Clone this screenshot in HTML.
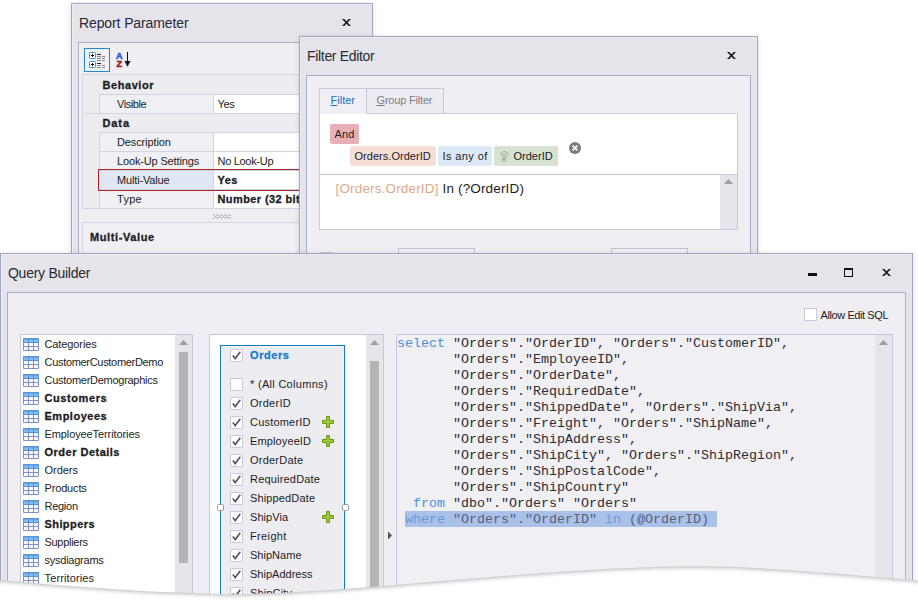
<!DOCTYPE html>
<html><head><meta charset="utf-8"><title>Query Builder</title><style>
*{box-sizing:border-box;margin:0;padding:0}
html,body{width:918px;height:601px;overflow:hidden;background:#fff}
body{position:relative;font-family:"Liberation Sans", "DejaVu Sans", sans-serif;font-size:11px;color:#1c1c24;line-height:1}
.a{position:absolute}
.t{position:absolute;white-space:pre;line-height:1}
.b{font-weight:bold;-webkit-text-stroke:0.3px}
.win{position:absolute;background:#e4e4ea;border:1px solid #a2a5c4;box-shadow:inset 1px 1px 0 #ededf2, 0 1px 5px rgba(0,0,0,0.140)}
.ttl{position:absolute;white-space:pre;font-size:13px;color:#2a2a36;line-height:1}
.pnl{position:absolute;background:#eeeef3;border:1px solid #abaecb}
.cb{position:absolute;width:13px;height:13px;background:#fff;border:1px solid #c9cbdb}
.mono{font-family:"Liberation Mono", "DejaVu Sans Mono", monospace;font-size:13.33px;white-space:pre;position:absolute;line-height:16px;color:#2c2c36}
.kw{color:#4a8fd8}
</style></head><body>
<div class="win" style="left:71px;top:3px;width:302px;height:300px"></div>
<div class="t " style="left:79px;top:16px;font-size:14px;line-height:14px;letter-spacing:-0.11px;color:#2a2a36">Report Parameter</div>
<svg class="a" style="left:341px;top:18px" width="11" height="9" viewBox="0 0 11 9"><path d="M1 1H3.300L10 8H7.700Z" fill="#1c1c1c"/><path d="M10 1H7.700L1 8H3.300Z" fill="#1c1c1c"/></svg>
<div class="pnl" style="left:78px;top:42px;width:288px;height:260px"></div>
<div class="a" style="left:84px;top:48px;width:26px;height:24px;border:1px solid #2388d2;background:#f1f1f5"></div>
<svg class="a" style="left:89px;top:52px" width="17" height="17" viewBox="0 0 17 17">
<rect x="0.5" y="0.5" width="6" height="6" rx="1" fill="#fff" stroke="#2f8cf0" stroke-width="1"/>
<rect x="0.5" y="9.5" width="6" height="6" rx="1" fill="#fff" stroke="#2f8cf0" stroke-width="1"/>
<path d="M2 3.5h3M3.5 2v3M2 12.5h3M3.5 11v3" stroke="#111" stroke-width="1"/>
<path d="M8 2.5h4M8 11.5h4" stroke="#222" stroke-width="1"/>
<path d="M8 4.5h4M8 6.5h4M8 8.5h4M8 13.5h4M8 15.5h4M13 4.500h3M13 6.5h3M13 8.5h3M13 13.5h3M13 15.5h3" stroke="#8a8a8a" stroke-width="1"/>
</svg>
<div class="t b" style="left:116px;top:52px;font-size:9px;color:#2a62e0;line-height:9px;-webkit-text-stroke:0.600px #2a62e0">A</div>
<div class="t b" style="left:116.500px;top:60px;font-size:9px;color:#9a1818;line-height:9px;-webkit-text-stroke:0.600px #9a1818">Z</div>
<svg class="a" style="left:124px;top:52px" width="7" height="15" viewBox="0 0 7 15"><path d="M3.500 0V10" stroke="#111" stroke-width="1"/><path d="M0.500 9 L6.500 9 L3.500 14.800 Z" fill="#111"/></svg>
<div class="a" style="left:82px;top:74px;width:290px;height:135px;border:1px solid #d2d4e2;background:#ececf1"></div>
<div class="t b" style="left:102.5px;top:80px;font-size:11px;line-height:11px;letter-spacing:0.56px;">Behavior</div>
<div class="a" style="left:99px;top:94px;width:115px;height:20px;background:#efeff4;border:1px solid #d2d4e2"></div>
<div class="a" style="left:213px;top:94px;width:160px;height:20px;background:#fff;border:1px solid #d2d4e2"></div>
<div class="t " style="left:117px;top:99px;font-size:11px;line-height:11px;letter-spacing:-0.45px;">Visible</div>
<div class="t " style="left:217.5px;top:99px;font-size:11px;line-height:11px;letter-spacing:-0.30px;">Yes</div>
<div class="t b" style="left:102.5px;top:118px;font-size:11px;line-height:11px;letter-spacing:0.90px;">Data</div>
<div class="a" style="left:99px;top:132px;width:115px;height:20px;background:#efeff4;border:1px solid #d2d4e2"></div>
<div class="a" style="left:213px;top:132px;width:160px;height:20px;background:#fff;border:1px solid #d2d4e2"></div>
<div class="t " style="left:117px;top:137px;font-size:11px;line-height:11px;letter-spacing:-0.12px;">Description</div>
<div class="a" style="left:99px;top:151px;width:115px;height:20px;background:#efeff4;border:1px solid #d2d4e2"></div>
<div class="a" style="left:213px;top:151px;width:160px;height:20px;background:#fff;border:1px solid #d2d4e2"></div>
<div class="t " style="left:117px;top:156px;font-size:11px;line-height:11px;letter-spacing:-0.15px;">Look-Up Settings</div>
<div class="t " style="left:217.5px;top:156px;font-size:11px;line-height:11px;letter-spacing:-0.30px;">No Look-Up</div>
<div class="a" style="left:99px;top:170px;width:115px;height:20px;background:#dfe7f5;border:1px solid #d2d4e2"></div>
<div class="a" style="left:213px;top:170px;width:160px;height:20px;background:#fff;border:1px solid #d2d4e2"></div>
<div class="t " style="left:117px;top:175px;font-size:11px;line-height:11px;letter-spacing:-0.15px;">Multi-Value</div>
<div class="t b" style="left:217.5px;top:175px;font-size:11px;line-height:11px;letter-spacing:0.40px;">Yes</div>
<div class="a" style="left:99px;top:189px;width:115px;height:20px;background:#efeff4;border:1px solid #d2d4e2"></div>
<div class="a" style="left:213px;top:189px;width:160px;height:20px;background:#fff;border:1px solid #d2d4e2"></div>
<div class="t " style="left:117px;top:194px;font-size:11px;line-height:11px;letter-spacing:0.28px;">Type</div>
<div class="t b" style="left:217.5px;top:194px;font-size:11px;line-height:11px;letter-spacing:0.40px;">Number (32 bit integer)</div>
<div class="a" style="left:84px;top:113px;width:15px;height:1px;background:#d2d4e2"></div>
<div class="a" style="left:98px;top:169px;width:280px;height:22px;border:1px solid #a8222a;border-right:none"></div>
<div class="a" style="left:99px;top:170px;width:115px;height:20px;"></div>
<svg class="a" style="left:213px;top:214px" width="18" height="5" viewBox="0 0 18 5"><rect x="0" y="0" width="1" height="1" fill="#a6a8bc"/><rect x="4" y="0" width="1" height="1" fill="#a6a8bc"/><rect x="8" y="0" width="1" height="1" fill="#a6a8bc"/><rect x="12" y="0" width="1" height="1" fill="#a6a8bc"/><rect x="16" y="0" width="1" height="1" fill="#a6a8bc"/><rect x="1" y="1" width="1" height="1" fill="#a6a8bc"/><rect x="3" y="1" width="1" height="1" fill="#a6a8bc"/><rect x="5" y="1" width="1" height="1" fill="#a6a8bc"/><rect x="7" y="1" width="1" height="1" fill="#a6a8bc"/><rect x="9" y="1" width="1" height="1" fill="#a6a8bc"/><rect x="11" y="1" width="1" height="1" fill="#a6a8bc"/><rect x="13" y="1" width="1" height="1" fill="#a6a8bc"/><rect x="15" y="1" width="1" height="1" fill="#a6a8bc"/><rect x="17" y="1" width="1" height="1" fill="#a6a8bc"/><rect x="2" y="2" width="1" height="1" fill="#a6a8bc"/><rect x="6" y="2" width="1" height="1" fill="#a6a8bc"/><rect x="10" y="2" width="1" height="1" fill="#a6a8bc"/><rect x="14" y="2" width="1" height="1" fill="#a6a8bc"/><rect x="1" y="3" width="1" height="1" fill="#a6a8bc"/><rect x="3" y="3" width="1" height="1" fill="#a6a8bc"/><rect x="5" y="3" width="1" height="1" fill="#a6a8bc"/><rect x="7" y="3" width="1" height="1" fill="#a6a8bc"/><rect x="9" y="3" width="1" height="1" fill="#a6a8bc"/><rect x="11" y="3" width="1" height="1" fill="#a6a8bc"/><rect x="13" y="3" width="1" height="1" fill="#a6a8bc"/><rect x="15" y="3" width="1" height="1" fill="#a6a8bc"/><rect x="17" y="3" width="1" height="1" fill="#a6a8bc"/><rect x="0" y="4" width="1" height="1" fill="#a6a8bc"/><rect x="4" y="4" width="1" height="1" fill="#a6a8bc"/><rect x="8" y="4" width="1" height="1" fill="#a6a8bc"/><rect x="12" y="4" width="1" height="1" fill="#a6a8bc"/><rect x="16" y="4" width="1" height="1" fill="#a6a8bc"/></svg>
<div class="a" style="left:82px;top:222px;width:290px;height:60px;border:1px solid #d2d4e2;background:#efeff4"></div>
<div class="t b" style="left:90px;top:232px;font-size:11px;line-height:11px;letter-spacing:0.61px;">Multi-Value</div>
<div class="win" style="left:299px;top:36px;width:459px;height:260px"></div>
<div class="t " style="left:307px;top:49px;font-size:14px;line-height:14px;letter-spacing:-0.32px;color:#2a2a36">Filter Editor</div>
<svg class="a" style="left:726px;top:51px" width="11" height="9" viewBox="0 0 11 9"><path d="M1 1H3.300L10 8H7.700Z" fill="#1c1c1c"/><path d="M10 1H7.700L1 8H3.300Z" fill="#1c1c1c"/></svg>
<div class="pnl" style="left:306px;top:75px;width:445px;height:220px"></div>
<div class="a" style="left:319px;top:113px;width:419px;height:117px;background:#fff;border:1px solid #c8cadb"></div>
<div class="a" style="left:319px;top:88px;width:48px;height:26px;background:#efeff4;border:1px solid #c8cadb;border-bottom:none"></div>
<div class="a" style="left:366px;top:88px;width:78px;height:26px;background:#ececf1;border:1px solid #c8cadb"></div>
<div class="t " style="left:330.5px;top:95px;font-size:11px;line-height:11px;letter-spacing:0.01px;color:#1a70c8"><u>F</u>ilter</div>
<div class="t " style="left:376.5px;top:95px;font-size:11px;line-height:11px;letter-spacing:-0.19px;color:#7c7c88"><u>G</u>roup Filter</div>
<div class="a" style="left:330px;top:124px;width:29px;height:20px;background:#e8b0b4;border-radius:2px"></div>
<div class="t " style="left:334.5px;top:129px;font-size:11px;line-height:11px;letter-spacing:0.21px;">And</div>
<div class="a" style="left:350px;top:146px;width:86px;height:20px;background:#f5ded8;border-radius:2px"></div>
<div class="t " style="left:354.5px;top:151px;font-size:11px;line-height:11px;letter-spacing:0.03px;">Orders.OrderID</div>
<div class="a" style="left:438px;top:146px;width:54px;height:20px;background:#dde9f6;border-radius:2px"></div>
<div class="t " style="left:442.5px;top:151px;font-size:11px;line-height:11px;letter-spacing:0.39px;">Is any of</div>
<div class="a" style="left:494px;top:146px;width:64px;height:20px;background:#d6e2d2;border-radius:2px"></div>
<div class="t " style="left:513.5px;top:151px;font-size:11px;line-height:11px;letter-spacing:0.01px;">OrderID</div>
<div class="t" style="left:500.300px;top:150px;font-size:13px;line-height:13px;font-weight:bold;color:#d6e2d2;-webkit-text-stroke:1px #7f8582;paint-order:stroke fill">?</div>
<svg class="a" style="left:569px;top:142px" width="12" height="12" viewBox="0 0 12 12"><circle cx="6" cy="6" r="6" fill="#7d7d7d"/><path d="M3.600 3.600L8.400 8.400M8.400 3.600L3.600 8.400" stroke="#fff" stroke-width="1.600"/></svg>
<div class="a" style="left:320px;top:174px;width:417px;height:1px;background:#c8cadb"></div>
<div class="a" style="left:720px;top:175px;width:17px;height:54px;background:#e6e6ea"></div>
<svg class="a" style="left:724px;top:179px" width="9" height="5" viewBox="0 0 9 5"><path d="M0 5L4.500 0L9 5Z" fill="#9e9ea2"/></svg>
<div class="t " style="left:335.5px;top:182px;font-size:13.5px;line-height:13.5px;letter-spacing:0.16px;"><span style="color:#e0a98c">[Orders.OrderID]</span> In (?OrderID)</div>
<div class="a" style="left:320px;top:252px;width:13px;height:6px;background:#f6f6f9;border:1px solid #c6c8d6"></div>
<div class="a" style="left:398px;top:248px;width:77px;height:10px;background:#efeff4;border:1px solid #c0c2d4"></div>
<div class="a" style="left:611px;top:248px;width:77px;height:10px;background:#efeff4;border:1px solid #c0c2d4"></div>
<div class="win" style="left:0px;top:253px;width:913px;height:360px"></div>
<div class="t " style="left:8px;top:266px;font-size:14px;line-height:14px;letter-spacing:-0.27px;color:#2a2a36">Query Builder</div>
<div class="a" style="left:808px;top:273px;width:9px;height:3px;background:#111"></div>
<div class="a" style="left:844px;top:268px;width:9px;height:9px;border:1px solid #111;border-top-width:2px"></div>
<svg class="a" style="left:881px;top:268px" width="11" height="9" viewBox="0 0 11 9"><path d="M1 1H3.300L10 8H7.700Z" fill="#1c1c1c"/><path d="M10 1H7.700L1 8H3.300Z" fill="#1c1c1c"/></svg>
<div class="pnl" style="left:7px;top:292px;width:899px;height:320px"></div>
<div class="cb" style="left:804px;top:308px;background:#fff"></div>
<div class="t " style="left:820.5px;top:310px;font-size:11px;line-height:11px;letter-spacing:-0.41px;">Allow Edit SQL</div>
<div class="a" style="left:20px;top:334px;width:173px;height:280px;background:#fff;border:1px solid #c6c8da"></div>
<div class="a" style="left:175px;top:335px;width:17px;height:278px;background:#e6e6ea"></div>
<svg class="a" style="left:179px;top:340px" width="9" height="5" viewBox="0 0 9 5"><path d="M0 5L4.500 0L9 5Z" fill="#9e9ea2"/></svg>
<div class="a" style="left:179px;top:352px;width:9px;height:211px;background:#b4b4b6"></div>
<svg class="a" style="left:23px;top:338px" width="16" height="13" viewBox="0 0 16 13">
<rect x="0" y="0" width="16" height="13" rx="1.200" fill="#8190cb"/>
<path d="M0 5V1.200Q0 0 1.200 0H14.800Q16 0 16 1.200V5Z" fill="#5593d8"/>
<path d="M1 1h4v3h-4zM6 1h4v3h-4zM11 1h4v3h-4z" fill="#86bdf0"/>
<path d="M1 1h4v1h-4zM6 1h4v1h-4zM11 1h4v1h-4z" fill="#6aa9e6"/>
<path d="M1 5h4v3h-4zM6 5h4v3h-4zM11 5h4v3h-4zM1 9h4v3h-4zM6 9h4v3h-4zM11 9h4v3h-4z" fill="#f6f8fd"/>
</svg>
<div class="t " style="left:44.5px;top:339px;font-size:11px;line-height:11px;letter-spacing:-0.10px;">Categories</div>
<svg class="a" style="left:23px;top:356px" width="16" height="13" viewBox="0 0 16 13">
<rect x="0" y="0" width="16" height="13" rx="1.200" fill="#8190cb"/>
<path d="M0 5V1.200Q0 0 1.200 0H14.800Q16 0 16 1.200V5Z" fill="#5593d8"/>
<path d="M1 1h4v3h-4zM6 1h4v3h-4zM11 1h4v3h-4z" fill="#86bdf0"/>
<path d="M1 1h4v1h-4zM6 1h4v1h-4zM11 1h4v1h-4z" fill="#6aa9e6"/>
<path d="M1 5h4v3h-4zM6 5h4v3h-4zM11 5h4v3h-4zM1 9h4v3h-4zM6 9h4v3h-4zM11 9h4v3h-4z" fill="#f6f8fd"/>
</svg>
<div class="t " style="left:44.5px;top:357px;font-size:11px;line-height:11px;letter-spacing:-0.31px;">CustomerCustomerDemo</div>
<svg class="a" style="left:23px;top:374px" width="16" height="13" viewBox="0 0 16 13">
<rect x="0" y="0" width="16" height="13" rx="1.200" fill="#8190cb"/>
<path d="M0 5V1.200Q0 0 1.200 0H14.800Q16 0 16 1.200V5Z" fill="#5593d8"/>
<path d="M1 1h4v3h-4zM6 1h4v3h-4zM11 1h4v3h-4z" fill="#86bdf0"/>
<path d="M1 1h4v1h-4zM6 1h4v1h-4zM11 1h4v1h-4z" fill="#6aa9e6"/>
<path d="M1 5h4v3h-4zM6 5h4v3h-4zM11 5h4v3h-4zM1 9h4v3h-4zM6 9h4v3h-4zM11 9h4v3h-4z" fill="#f6f8fd"/>
</svg>
<div class="t " style="left:44.5px;top:375px;font-size:11px;line-height:11px;letter-spacing:-0.27px;">CustomerDemographics</div>
<svg class="a" style="left:23px;top:392px" width="16" height="13" viewBox="0 0 16 13">
<rect x="0" y="0" width="16" height="13" rx="1.200" fill="#8190cb"/>
<path d="M0 5V1.200Q0 0 1.200 0H14.800Q16 0 16 1.200V5Z" fill="#5593d8"/>
<path d="M1 1h4v3h-4zM6 1h4v3h-4zM11 1h4v3h-4z" fill="#86bdf0"/>
<path d="M1 1h4v1h-4zM6 1h4v1h-4zM11 1h4v1h-4z" fill="#6aa9e6"/>
<path d="M1 5h4v3h-4zM6 5h4v3h-4zM11 5h4v3h-4zM1 9h4v3h-4zM6 9h4v3h-4zM11 9h4v3h-4z" fill="#f6f8fd"/>
</svg>
<div class="t b" style="left:44.5px;top:393px;font-size:11px;line-height:11px;letter-spacing:0.59px;">Customers</div>
<svg class="a" style="left:23px;top:410px" width="16" height="13" viewBox="0 0 16 13">
<rect x="0" y="0" width="16" height="13" rx="1.200" fill="#8190cb"/>
<path d="M0 5V1.200Q0 0 1.200 0H14.800Q16 0 16 1.200V5Z" fill="#5593d8"/>
<path d="M1 1h4v3h-4zM6 1h4v3h-4zM11 1h4v3h-4z" fill="#86bdf0"/>
<path d="M1 1h4v1h-4zM6 1h4v1h-4zM11 1h4v1h-4z" fill="#6aa9e6"/>
<path d="M1 5h4v3h-4zM6 5h4v3h-4zM11 5h4v3h-4zM1 9h4v3h-4zM6 9h4v3h-4zM11 9h4v3h-4z" fill="#f6f8fd"/>
</svg>
<div class="t b" style="left:44.5px;top:411px;font-size:11px;line-height:11px;letter-spacing:0.51px;">Employees</div>
<svg class="a" style="left:23px;top:428px" width="16" height="13" viewBox="0 0 16 13">
<rect x="0" y="0" width="16" height="13" rx="1.200" fill="#8190cb"/>
<path d="M0 5V1.200Q0 0 1.200 0H14.800Q16 0 16 1.200V5Z" fill="#5593d8"/>
<path d="M1 1h4v3h-4zM6 1h4v3h-4zM11 1h4v3h-4z" fill="#86bdf0"/>
<path d="M1 1h4v1h-4zM6 1h4v1h-4zM11 1h4v1h-4z" fill="#6aa9e6"/>
<path d="M1 5h4v3h-4zM6 5h4v3h-4zM11 5h4v3h-4zM1 9h4v3h-4zM6 9h4v3h-4zM11 9h4v3h-4z" fill="#f6f8fd"/>
</svg>
<div class="t " style="left:44.5px;top:429px;font-size:11px;line-height:11px;letter-spacing:-0.10px;">EmployeeTerritories</div>
<svg class="a" style="left:23px;top:446px" width="16" height="13" viewBox="0 0 16 13">
<rect x="0" y="0" width="16" height="13" rx="1.200" fill="#8190cb"/>
<path d="M0 5V1.200Q0 0 1.200 0H14.800Q16 0 16 1.200V5Z" fill="#5593d8"/>
<path d="M1 1h4v3h-4zM6 1h4v3h-4zM11 1h4v3h-4z" fill="#86bdf0"/>
<path d="M1 1h4v1h-4zM6 1h4v1h-4zM11 1h4v1h-4z" fill="#6aa9e6"/>
<path d="M1 5h4v3h-4zM6 5h4v3h-4zM11 5h4v3h-4zM1 9h4v3h-4zM6 9h4v3h-4zM11 9h4v3h-4z" fill="#f6f8fd"/>
</svg>
<div class="t b" style="left:44.5px;top:447px;font-size:11px;line-height:11px;letter-spacing:0.49px;">Order Details</div>
<svg class="a" style="left:23px;top:464px" width="16" height="13" viewBox="0 0 16 13">
<rect x="0" y="0" width="16" height="13" rx="1.200" fill="#8190cb"/>
<path d="M0 5V1.200Q0 0 1.200 0H14.800Q16 0 16 1.200V5Z" fill="#5593d8"/>
<path d="M1 1h4v3h-4zM6 1h4v3h-4zM11 1h4v3h-4z" fill="#86bdf0"/>
<path d="M1 1h4v1h-4zM6 1h4v1h-4zM11 1h4v1h-4z" fill="#6aa9e6"/>
<path d="M1 5h4v3h-4zM6 5h4v3h-4zM11 5h4v3h-4zM1 9h4v3h-4zM6 9h4v3h-4zM11 9h4v3h-4z" fill="#f6f8fd"/>
</svg>
<div class="t " style="left:44.5px;top:465px;font-size:11px;line-height:11px;letter-spacing:-0.03px;">Orders</div>
<svg class="a" style="left:23px;top:482px" width="16" height="13" viewBox="0 0 16 13">
<rect x="0" y="0" width="16" height="13" rx="1.200" fill="#8190cb"/>
<path d="M0 5V1.200Q0 0 1.200 0H14.800Q16 0 16 1.200V5Z" fill="#5593d8"/>
<path d="M1 1h4v3h-4zM6 1h4v3h-4zM11 1h4v3h-4z" fill="#86bdf0"/>
<path d="M1 1h4v1h-4zM6 1h4v1h-4zM11 1h4v1h-4z" fill="#6aa9e6"/>
<path d="M1 5h4v3h-4zM6 5h4v3h-4zM11 5h4v3h-4zM1 9h4v3h-4zM6 9h4v3h-4zM11 9h4v3h-4z" fill="#f6f8fd"/>
</svg>
<div class="t " style="left:44.5px;top:483px;font-size:11px;line-height:11px;letter-spacing:-0.16px;">Products</div>
<svg class="a" style="left:23px;top:500px" width="16" height="13" viewBox="0 0 16 13">
<rect x="0" y="0" width="16" height="13" rx="1.200" fill="#8190cb"/>
<path d="M0 5V1.200Q0 0 1.200 0H14.800Q16 0 16 1.200V5Z" fill="#5593d8"/>
<path d="M1 1h4v3h-4zM6 1h4v3h-4zM11 1h4v3h-4z" fill="#86bdf0"/>
<path d="M1 1h4v1h-4zM6 1h4v1h-4zM11 1h4v1h-4z" fill="#6aa9e6"/>
<path d="M1 5h4v3h-4zM6 5h4v3h-4zM11 5h4v3h-4zM1 9h4v3h-4zM6 9h4v3h-4zM11 9h4v3h-4z" fill="#f6f8fd"/>
</svg>
<div class="t " style="left:44.5px;top:501px;font-size:11px;line-height:11px;letter-spacing:-0.27px;">Region</div>
<svg class="a" style="left:23px;top:518px" width="16" height="13" viewBox="0 0 16 13">
<rect x="0" y="0" width="16" height="13" rx="1.200" fill="#8190cb"/>
<path d="M0 5V1.200Q0 0 1.200 0H14.800Q16 0 16 1.200V5Z" fill="#5593d8"/>
<path d="M1 1h4v3h-4zM6 1h4v3h-4zM11 1h4v3h-4z" fill="#86bdf0"/>
<path d="M1 1h4v1h-4zM6 1h4v1h-4zM11 1h4v1h-4z" fill="#6aa9e6"/>
<path d="M1 5h4v3h-4zM6 5h4v3h-4zM11 5h4v3h-4zM1 9h4v3h-4zM6 9h4v3h-4zM11 9h4v3h-4z" fill="#f6f8fd"/>
</svg>
<div class="t b" style="left:44.5px;top:519px;font-size:11px;line-height:11px;letter-spacing:0.42px;">Shippers</div>
<svg class="a" style="left:23px;top:536px" width="16" height="13" viewBox="0 0 16 13">
<rect x="0" y="0" width="16" height="13" rx="1.200" fill="#8190cb"/>
<path d="M0 5V1.200Q0 0 1.200 0H14.800Q16 0 16 1.200V5Z" fill="#5593d8"/>
<path d="M1 1h4v3h-4zM6 1h4v3h-4zM11 1h4v3h-4z" fill="#86bdf0"/>
<path d="M1 1h4v1h-4zM6 1h4v1h-4zM11 1h4v1h-4z" fill="#6aa9e6"/>
<path d="M1 5h4v3h-4zM6 5h4v3h-4zM11 5h4v3h-4zM1 9h4v3h-4zM6 9h4v3h-4zM11 9h4v3h-4z" fill="#f6f8fd"/>
</svg>
<div class="t " style="left:44.5px;top:537px;font-size:11px;line-height:11px;letter-spacing:-0.29px;">Suppliers</div>
<svg class="a" style="left:23px;top:554px" width="16" height="13" viewBox="0 0 16 13">
<rect x="0" y="0" width="16" height="13" rx="1.200" fill="#8190cb"/>
<path d="M0 5V1.200Q0 0 1.200 0H14.800Q16 0 16 1.200V5Z" fill="#5593d8"/>
<path d="M1 1h4v3h-4zM6 1h4v3h-4zM11 1h4v3h-4z" fill="#86bdf0"/>
<path d="M1 1h4v1h-4zM6 1h4v1h-4zM11 1h4v1h-4z" fill="#6aa9e6"/>
<path d="M1 5h4v3h-4zM6 5h4v3h-4zM11 5h4v3h-4zM1 9h4v3h-4zM6 9h4v3h-4zM11 9h4v3h-4z" fill="#f6f8fd"/>
</svg>
<div class="t " style="left:44.5px;top:555px;font-size:11px;line-height:11px;letter-spacing:-0.24px;">sysdiagrams</div>
<svg class="a" style="left:23px;top:572px" width="16" height="13" viewBox="0 0 16 13">
<rect x="0" y="0" width="16" height="13" rx="1.200" fill="#8190cb"/>
<path d="M0 5V1.200Q0 0 1.200 0H14.800Q16 0 16 1.200V5Z" fill="#5593d8"/>
<path d="M1 1h4v3h-4zM6 1h4v3h-4zM11 1h4v3h-4z" fill="#86bdf0"/>
<path d="M1 1h4v1h-4zM6 1h4v1h-4zM11 1h4v1h-4z" fill="#6aa9e6"/>
<path d="M1 5h4v3h-4zM6 5h4v3h-4zM11 5h4v3h-4zM1 9h4v3h-4zM6 9h4v3h-4zM11 9h4v3h-4z" fill="#f6f8fd"/>
</svg>
<div class="t " style="left:44.5px;top:573px;font-size:11px;line-height:11px;letter-spacing:0.13px;">Territories</div>
<svg class="a" style="left:23px;top:590px" width="16" height="13" viewBox="0 0 16 13">
<rect x="0" y="0" width="16" height="13" rx="1.200" fill="#8190cb"/>
<path d="M0 5V1.200Q0 0 1.200 0H14.800Q16 0 16 1.200V5Z" fill="#5593d8"/>
<path d="M1 1h4v3h-4zM6 1h4v3h-4zM11 1h4v3h-4z" fill="#86bdf0"/>
<path d="M1 1h4v1h-4zM6 1h4v1h-4zM11 1h4v1h-4z" fill="#6aa9e6"/>
<path d="M1 5h4v3h-4zM6 5h4v3h-4zM11 5h4v3h-4zM1 9h4v3h-4zM6 9h4v3h-4zM11 9h4v3h-4z" fill="#f6f8fd"/>
</svg>
<div class="t " style="left:44.5px;top:591px;font-size:11px;line-height:11px;letter-spacing:-0.25px;">vwCustomers</div>
<div class="a" style="left:209px;top:334px;width:175px;height:280px;background:#fff;border:1px solid #c6c8da"></div>
<div class="a" style="left:366px;top:335px;width:17px;height:278px;background:#e6e6ea"></div>
<svg class="a" style="left:370px;top:340px" width="9" height="5" viewBox="0 0 9 5"><path d="M0 5L4.500 0L9 5Z" fill="#9e9ea2"/></svg>
<div class="a" style="left:370px;top:361px;width:9px;height:252px;background:#b4b4b6"></div>
<div class="a" style="left:220px;top:345px;width:125px;height:270px;background:#ececf1;border:1px solid #0d7acb;box-shadow:inset 0 0 0 1px #f5f3f5"></div>
<div class="cb" style="left:230px;top:349px"><svg width="11" height="11" viewBox="0 0 11 11" style="display:block"><path d="M1.800 5.600L4.200 8.600L9.300 1.800" fill="none" stroke="#555" stroke-width="1.600"/></svg></div>
<div class="t b" style="left:250px;top:350px;font-size:11px;line-height:11px;letter-spacing:0.58px;color:#1a7ad2">Orders</div>
<div class="cb" style="left:230px;top:378px"></div>
<div class="t " style="left:250px;top:379px;font-size:11px;line-height:11px;letter-spacing:0.30px;">* (All Columns)</div>
<div class="cb" style="left:230px;top:397px"><svg width="11" height="11" viewBox="0 0 11 11" style="display:block"><path d="M1.800 5.600L4.200 8.600L9.300 1.800" fill="none" stroke="#555" stroke-width="1.600"/></svg></div>
<div class="t " style="left:250px;top:398px;font-size:11px;line-height:11px;letter-spacing:0.26px;">OrderID</div>
<div class="cb" style="left:230px;top:416px"><svg width="11" height="11" viewBox="0 0 11 11" style="display:block"><path d="M1.800 5.600L4.200 8.600L9.300 1.800" fill="none" stroke="#555" stroke-width="1.600"/></svg></div>
<div class="t " style="left:250px;top:417px;font-size:11px;line-height:11px;letter-spacing:0.20px;">CustomerID</div>
<svg class="a" style="left:322px;top:416px" width="12" height="12" viewBox="0 0 12 12"><path d="M4.500 0.500h3v4h4v3h-4v4h-3v-4h-4v-3h4z" fill="#9ccc30" stroke="#6c9418" stroke-width="1" stroke-linejoin="round"/></svg>
<div class="cb" style="left:230px;top:435px"><svg width="11" height="11" viewBox="0 0 11 11" style="display:block"><path d="M1.800 5.600L4.200 8.600L9.300 1.800" fill="none" stroke="#555" stroke-width="1.600"/></svg></div>
<div class="t " style="left:250px;top:436px;font-size:11px;line-height:11px;letter-spacing:0.12px;">EmployeeID</div>
<svg class="a" style="left:322px;top:435px" width="12" height="12" viewBox="0 0 12 12"><path d="M4.500 0.500h3v4h4v3h-4v4h-3v-4h-4v-3h4z" fill="#9ccc30" stroke="#6c9418" stroke-width="1" stroke-linejoin="round"/></svg>
<div class="cb" style="left:230px;top:454px"><svg width="11" height="11" viewBox="0 0 11 11" style="display:block"><path d="M1.800 5.600L4.200 8.600L9.300 1.800" fill="none" stroke="#555" stroke-width="1.600"/></svg></div>
<div class="t " style="left:250px;top:455px;font-size:11px;line-height:11px;letter-spacing:0.22px;">OrderDate</div>
<div class="cb" style="left:230px;top:473px"><svg width="11" height="11" viewBox="0 0 11 11" style="display:block"><path d="M1.800 5.600L4.200 8.600L9.300 1.800" fill="none" stroke="#555" stroke-width="1.600"/></svg></div>
<div class="t " style="left:250px;top:474px;font-size:11px;line-height:11px;letter-spacing:0.19px;">RequiredDate</div>
<div class="cb" style="left:230px;top:492px"><svg width="11" height="11" viewBox="0 0 11 11" style="display:block"><path d="M1.800 5.600L4.200 8.600L9.300 1.800" fill="none" stroke="#555" stroke-width="1.600"/></svg></div>
<div class="t " style="left:250px;top:493px;font-size:11px;line-height:11px;letter-spacing:0.14px;">ShippedDate</div>
<div class="cb" style="left:230px;top:511px"><svg width="11" height="11" viewBox="0 0 11 11" style="display:block"><path d="M1.800 5.600L4.200 8.600L9.300 1.800" fill="none" stroke="#555" stroke-width="1.600"/></svg></div>
<div class="t " style="left:250px;top:512px;font-size:11px;line-height:11px;letter-spacing:0.05px;">ShipVia</div>
<svg class="a" style="left:322px;top:511px" width="12" height="12" viewBox="0 0 12 12"><path d="M4.500 0.500h3v4h4v3h-4v4h-3v-4h-4v-3h4z" fill="#9ccc30" stroke="#6c9418" stroke-width="1" stroke-linejoin="round"/></svg>
<div class="cb" style="left:230px;top:530px"><svg width="11" height="11" viewBox="0 0 11 11" style="display:block"><path d="M1.800 5.600L4.200 8.600L9.300 1.800" fill="none" stroke="#555" stroke-width="1.600"/></svg></div>
<div class="t " style="left:250px;top:531px;font-size:11px;line-height:11px;letter-spacing:0.36px;">Freight</div>
<div class="cb" style="left:230px;top:549px"><svg width="11" height="11" viewBox="0 0 11 11" style="display:block"><path d="M1.800 5.600L4.200 8.600L9.300 1.800" fill="none" stroke="#555" stroke-width="1.600"/></svg></div>
<div class="t " style="left:250px;top:550px;font-size:11px;line-height:11px;letter-spacing:0.02px;">ShipName</div>
<div class="cb" style="left:230px;top:568px"><svg width="11" height="11" viewBox="0 0 11 11" style="display:block"><path d="M1.800 5.600L4.200 8.600L9.300 1.800" fill="none" stroke="#555" stroke-width="1.600"/></svg></div>
<div class="t " style="left:250px;top:569px;font-size:11px;line-height:11px;letter-spacing:0.01px;">ShipAddress</div>
<div class="cb" style="left:230px;top:587px"><svg width="11" height="11" viewBox="0 0 11 11" style="display:block"><path d="M1.800 5.600L4.200 8.600L9.300 1.800" fill="none" stroke="#555" stroke-width="1.600"/></svg></div>
<div class="t " style="left:250px;top:588px;font-size:11px;line-height:11px;letter-spacing:0.15px;">ShipCity</div>
<div class="cb" style="left:230px;top:606px"><svg width="11" height="11" viewBox="0 0 11 11" style="display:block"><path d="M1.800 5.600L4.200 8.600L9.300 1.800" fill="none" stroke="#555" stroke-width="1.600"/></svg></div>
<div class="t " style="left:250px;top:607px;font-size:11px;line-height:11px;letter-spacing:0.15px;">ShipRegion</div>
<div class="a" style="left:217px;top:504px;width:7px;height:7px;background:#fff;border:1px solid #9a9a9e;border-radius:1.500px"></div>
<div class="a" style="left:342px;top:504px;width:7px;height:7px;background:#fff;border:1px solid #9a9a9e;border-radius:1.500px"></div>
<svg class="a" style="left:388px;top:531px" width="4" height="9" viewBox="0 0 4 9"><path d="M0 0.500L4 4.500L0 8.500Z" fill="#555"/></svg>
<div class="a" style="left:396px;top:334px;width:497px;height:280px;background:#efeff4;border:1px solid #c6c8da"></div>
<div class="a" style="left:875px;top:335px;width:17px;height:278px;background:#e6e6ea"></div>
<svg class="a" style="left:879px;top:340px" width="9" height="5" viewBox="0 0 9 5"><path d="M0 5L4.500 0L9 5Z" fill="#9e9ea2"/></svg>
<div class="a" style="left:405px;top:511px;width:312px;height:16px;background:#a9c1e8"></div>
<div class="mono" style="left:397px;top:336px"><span class="kw">select</span> "Orders"."OrderID", "Orders"."CustomerID",</div>
<div class="mono" style="left:397px;top:352px">       "Orders"."EmployeeID",</div>
<div class="mono" style="left:397px;top:368px">       "Orders"."OrderDate",</div>
<div class="mono" style="left:397px;top:384px">       "Orders"."RequiredDate",</div>
<div class="mono" style="left:397px;top:400px">       "Orders"."ShippedDate", "Orders"."ShipVia",</div>
<div class="mono" style="left:397px;top:416px">       "Orders"."Freight", "Orders"."ShipName",</div>
<div class="mono" style="left:397px;top:432px">       "Orders"."ShipAddress",</div>
<div class="mono" style="left:397px;top:448px">       "Orders"."ShipCity", "Orders"."ShipRegion",</div>
<div class="mono" style="left:397px;top:464px">       "Orders"."ShipPostalCode",</div>
<div class="mono" style="left:397px;top:480px">       "Orders"."ShipCountry"</div>
<div class="mono" style="left:397px;top:496px">  <span class="kw">from</span> "dbo"."Orders" "Orders"</div>
<div class="mono" style="left:397px;top:512px"> <span style="color:#6a9ada">where</span> <span style="color:#56607a">"Orders"."OrderID"</span> <span style="color:#6a9ada">in</span> <span style="color:#56607a">(@OrderID)</span></div>
<svg class="a" style="left:0;top:540px" width="918" height="61" viewBox="0 540 918 61">
<defs><filter id="sh" x="-5%" y="-50%" width="110%" height="200%"><feGaussianBlur stdDeviation="2.700"/></filter>
<clipPath id="bl"><path d="M-20 580.0 L0 580 L50 584.6 L100 588.3 L150 591.6 L200 593.3 L230 594.3 L280 593.1 L330 590 L380 586.3 L430 582 L460 579.6 L510 575.6 L560 571.8 L610 568.8 L660 566.8 L690 566.3 L738 567 L788 570 L838 573.8 L888 578 L918 580.5 L940 581 L940 640 L-20 640 Z"/></clipPath></defs>
<path d="M-20 580.0 L0 580 L50 584.6 L100 588.3 L150 591.6 L200 593.3 L230 594.3 L280 593.1 L330 590 L380 586.3 L430 582 L460 579.6 L510 575.6 L560 571.8 L610 568.8 L660 566.8 L690 566.3 L738 567 L788 570 L838 573.8 L888 578 L918 580.5 L940 581 L940 640 L-20 640 Z" fill="#fff"/>
<g clip-path="url(#bl)"><path d="M-20 580.0 L0 580 L50 584.6 L100 588.3 L150 591.6 L200 593.3 L230 594.3 L280 593.1 L330 590 L380 586.3 L430 582 L460 579.6 L510 575.6 L560 571.8 L610 568.8 L660 566.8 L690 566.3 L738 567 L788 570 L838 573.8 L888 578 L918 580.5 L940 581 L940 500 L-20 500 Z" fill="#000" opacity="0.360" filter="url(#sh)" transform="translate(0,0.500)"/></g>
</svg>
</body></html>
